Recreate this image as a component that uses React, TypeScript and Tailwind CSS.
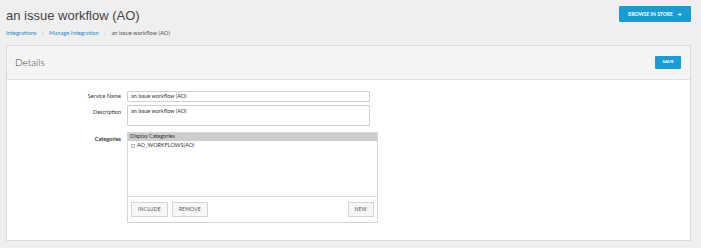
import React from 'react';
import { ArrowRight } from 'lucide-react';

const font = { fontFamily: 'Lato, "Liberation Sans", sans-serif' };

const GrayButton: React.FC<{ label: string }> = ({ label }) => (
  <button className="h-[15px] px-[6px] bg-[#f7f7f7] border border-[#d4d4d4] text-[5px] text-[#555] uppercase tracking-[0.2px] leading-none">
    {label}
  </button>
);

const App: React.FC = () => {
  return (
    <div
      className="w-[701px] h-[248px] bg-[#efefef] overflow-hidden flex flex-col"
      style={font}
    >
      {/* Page header */}
      <div className="flex justify-between items-start pl-[6px] pr-[10px] pt-[6px] h-[45px]">
        <div>
          <h1
            className="text-[13px] text-[#444] leading-[20px]"
            style={{ fontFamily: '"Liberation Sans", Arial, sans-serif' }}
          >
            an issue workflow (AO)
          </h1>
          <div className="mt-[4px] flex items-center gap-[5px] text-[5.8px] leading-none">
            <a className="text-[#2b8cc4]">Integrations</a>
            <span className="text-[#bbb]">/</span>
            <a className="text-[#2b8cc4]">Manage Integration</a>
            <span className="text-[#bbb]">/</span>
            <span className="text-[#555]">an issue workflow (AO)</span>
          </div>
        </div>
        <button className="w-[72px] h-[16px] bg-[#1a9bd6] rounded-[1px] flex items-center justify-center gap-[4px] text-white text-[5px] font-bold uppercase leading-none">
          Browse in store
          <ArrowRight className="w-[5px] h-[5px]" strokeWidth={4} />
        </button>
      </div>

      {/* Details panel */}
      <div className="ml-[6px] mr-[10px] h-[196px] border border-[#dcdcdc] bg-white flex flex-col">
        <div className="h-[34px] bg-[#f4f4f4] border-b border-[#e2e2e2] flex items-center justify-between pl-[8px] pr-[9px]">
          <span className="text-[10px] font-light text-[#444]">Details</span>
          <button className="w-[26px] h-[13px] bg-[#1a9bd6] rounded-[1px] text-white text-[4.5px] font-bold uppercase leading-none">
            Save
          </button>
        </div>

        <div className="pt-[11px] flex flex-col gap-[3px]">
          <div className="flex items-center gap-[6px]">
            <label className="w-[114px] text-right text-[5.5px] text-[#333]">
              Service Name
            </label>
            <div className="w-[243px] h-[11px] border border-[#cfcfcf] rounded-[1px] px-[3px] flex items-center text-[5.5px] text-[#333]">
              an issue workflow (AO)
            </div>
          </div>

          <div className="flex items-start gap-[6px]">
            <label className="w-[114px] text-right text-[5.5px] text-[#333] pt-[3px]">
              Description
            </label>
            <textarea
              readOnly
              defaultValue="an issue workflow (AO)"
              className="w-[243px] h-[21px] border border-[#cfcfcf] rounded-[1px] px-[3px] py-[2px] text-[5.5px] text-[#333] leading-tight outline-none resize-none"
              style={font}
            />
          </div>

          <div className="flex items-start gap-[6px] mt-[3px]">
            <label className="w-[114px] text-right text-[5.5px] font-bold text-[#333] pt-[3px]">
              Categories
            </label>
            <div className="w-[251px] h-[91px] border border-[#d6d6d6] flex flex-col">
              <div className="flex-1 flex flex-col">
                <div className="h-[8px] bg-[#cdcdcd] px-[2px] flex items-center text-[5.5px] text-[#333] leading-none">
                  Display Categories
                </div>
                <div className="pl-[3px] pt-[2px] flex items-center gap-[2px] text-[5.5px] text-[#333] leading-none">
                  <span className="w-[4px] h-[4px] border border-[#bbb] bg-white" />
                  AO_WORKFLOWS(AO)
                </div>
              </div>
              <div className="h-[26px] border-t border-[#dedede] flex items-center justify-between px-[3px]">
                <div className="flex gap-[4px]">
                  <GrayButton label="Include" />
                  <GrayButton label="Remove" />
                </div>
                <GrayButton label="New" />
              </div>
            </div>
          </div>
        </div>
      </div>
    </div>
  );
};

export default App;
